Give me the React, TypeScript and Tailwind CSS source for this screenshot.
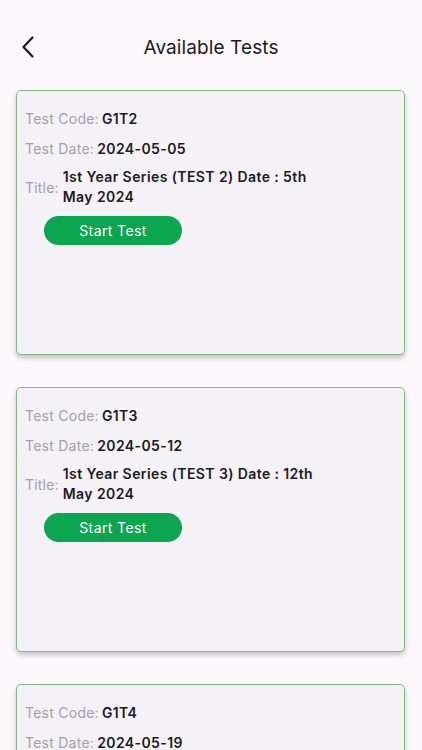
type TestItem = {
  code: string
  date: string
  title: string
}

const tests: TestItem[] = [
  { code: "G1T2", date: "2024-05-05", title: "1st Year Series (TEST 2) Date : 5th May 2024" },
  { code: "G1T3", date: "2024-05-12", title: "1st Year Series (TEST 3) Date : 12th May 2024" },
  { code: "G1T4", date: "2024-05-19", title: "1st Year Series (TEST 4) Date : 19th May 2024" },
]

function TestCard({ test }: { test: TestItem }) {
  return (
    <div className="h-[265px] shrink-0 rounded-[5px] border border-[#7fbd82] bg-[#f5f2f7] px-[8px] pt-[17px] shadow-[0_3px_5px_rgba(0,0,0,0.22)]">
      <div className="flex h-5 items-center text-[14px]">
        <span className="tracking-[0.25px] text-[#a3a1a6]">Test Code:</span>
        <span className="ml-[3px] font-semibold tracking-[0.3px] text-[#1c1b1f]">{test.code}</span>
      </div>
      <div className="mt-[10px] flex h-5 items-center text-[14px]">
        <span className="tracking-[0.25px] text-[#a3a1a6]">Test Date:</span>
        <span className="ml-[3px] font-semibold tracking-[0.4px] text-[#1c1b1f]">{test.date}</span>
      </div>
      <div className="mt-[9px] flex items-center text-[14px]">
        <span className="tracking-[0.2px] text-[#a3a1a6]">Title:</span>
        <span className="ml-[4px] w-[262px] font-semibold leading-5 tracking-[0.4px] text-[#1c1b1f]">
          {test.title}
        </span>
      </div>
      <button
        type="button"
        className="ml-[19px] mt-[9px] flex h-[29px] w-[138px] items-center justify-center rounded-full bg-[#0ca651] text-[14px] tracking-[0.4px] text-white"
      >
        Start Test
      </button>
    </div>
  )
}

export default function App() {
  return (
    <div
      className="flex h-[750px] w-full flex-col overflow-hidden bg-[#fcf8fc]"
      style={{ fontFamily: "Inter, 'Noto Sans', sans-serif" }}
    >
      <div className="relative flex h-[64px] shrink-0 items-end justify-center pb-[2px] pt-[26px]">
        <button type="button" className="absolute left-[20px] top-[35px] text-[#1c1b1f]" aria-label="Back">
          <svg width="16" height="24" viewBox="0 0 16 24" fill="none">
            <path d="M12.5 2.5 L3.5 12 L12.5 21.5" stroke="currentColor" strokeWidth="2.2" strokeLinecap="round" strokeLinejoin="round" />
          </svg>
        </button>
        <h1 className="text-[19px] font-normal tracking-[0.1px] text-[#1c1b1f]">Available Tests</h1>
      </div>
      <div className="flex flex-col gap-[32px] px-[16px] pt-[26px] pr-[17px]">
        {tests.map((t) => (
          <TestCard key={t.code} test={t} />
        ))}
      </div>
    </div>
  )
}
